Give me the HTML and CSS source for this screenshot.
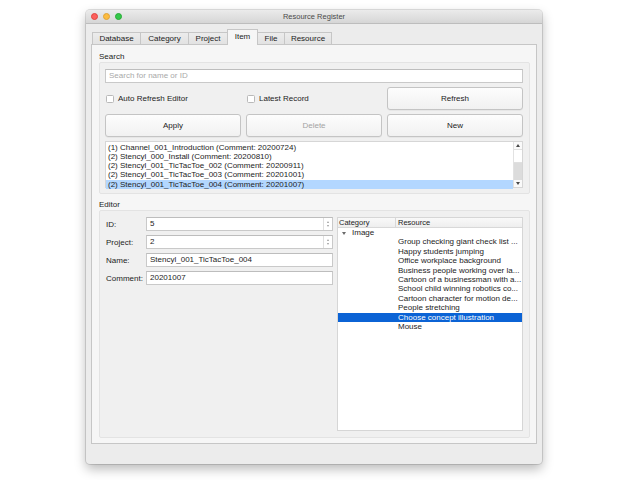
FILE: index.html
```html
<!DOCTYPE html>
<html>
<head>
<meta charset="utf-8">
<link rel="stylesheet" href="styles.css">
</head>
<body>
<div class="window">
  <div class="titlebar">
    <div class="lights"><span class="light red"></span><span class="light yellow"></span><span class="light green"></span></div>
    <div class="title">Resource Register</div>
  </div>
  <div class="content">
    <div class="tabs">
      <div class="tab w-db">Database</div>
      <div class="tab w-cat">Category</div>
      <div class="tab w-proj">Project</div>
      <div class="tab active w-item">Item</div>
      <div class="tab w-file">File</div>
      <div class="tab w-res">Resource</div>
    </div>
    <div class="pane">
      <div class="group-label">Search</div>
      <div class="group search-group">
        <div class="input search-input"><span class="placeholder">Search for name or ID</span></div>
        <div class="grid3">
          <label class="check"><span class="box"></span>Auto Refresh Editor</label>
          <label class="check"><span class="box"></span>Latest Record</label>
          <div class="button">Refresh</div>
          <div class="button">Apply</div>
          <div class="button disabled">Delete</div>
          <div class="button">New</div>
        </div>
        <div class="list">
          <div class="list-rows">
            <div class="row">(1) Channel_001_Introduction (Comment: 20200724)</div>
            <div class="row">(2) Stencyl_000_Install (Comment: 20200810)</div>
            <div class="row">(2) Stencyl_001_TicTacToe_002 (Comment: 20200911)</div>
            <div class="row">(2) Stencyl_001_TicTacToe_003 (Comment: 20201001)</div>
            <div class="row selected">(2) Stencyl_001_TicTacToe_004 (Comment: 20201007)</div>
          </div>
          <div class="scrollbar">
            <div class="arrow up"></div>
            <div class="thumb"></div>
            <div class="track"></div>
            <div class="arrow down"></div>
          </div>
        </div>
      </div>
      <div class="group-label">Editor</div>
      <div class="group editor-group">
        <div class="form">
          <div class="flabel">ID:</div>
          <div class="input spin"><span>5</span><span class="spinner"><i class="su"></i><i class="sd"></i></span></div>
          <div class="flabel">Project:</div>
          <div class="input spin"><span>2</span><span class="spinner"><i class="su"></i><i class="sd"></i></span></div>
          <div class="flabel">Name:</div>
          <div class="input"><span>Stencyl_001_TicTacToe_004</span></div>
          <div class="flabel">Comment:</div>
          <div class="input"><span>20201007</span></div>
        </div>
        <div class="tree">
          <div class="tree-header">
            <div class="hcol cat">Category</div>
            <div class="hcol res">Resource</div>
          </div>
          <div class="tree-row parent"><span class="disclosure"></span>Image</div>
          <div class="tree-row"><span class="res-text">Group checking giant check list ...</span></div>
          <div class="tree-row"><span class="res-text">Happy students jumping</span></div>
          <div class="tree-row"><span class="res-text">Office workplace background</span></div>
          <div class="tree-row"><span class="res-text">Business people working over la...</span></div>
          <div class="tree-row"><span class="res-text">Cartoon of a businessman with a...</span></div>
          <div class="tree-row"><span class="res-text">School child winning robotics co...</span></div>
          <div class="tree-row"><span class="res-text">Cartoon character for motion de...</span></div>
          <div class="tree-row"><span class="res-text">People stretching</span></div>
          <div class="tree-row selected"><span class="focus-dots"></span><span class="res-text">Choose concept illustration</span></div>
          <div class="tree-row"><span class="res-text">Mouse</span></div>
        </div>
      </div>
    </div>
  </div>
</div>
</body>
</html>
```

FILE: styles.css
```css
* { box-sizing: border-box; }
html, body { margin: 0; padding: 0; background: #ffffff; }
body {
  font-family: "Liberation Sans", Arial, sans-serif;
  font-size: 8px;
  color: #1c1c1c;
  width: 640px;
  height: 480px;
  overflow: hidden;
}
.window {
  margin: 10px 0 0 86px;
  width: 456px;
  height: 454px;
  background: #ececec;
  border-radius: 4px;
  box-shadow: 0 0 0 1px rgba(0,0,0,0.12), 0 5px 12px rgba(0,0,0,0.28);
  display: flex;
  flex-direction: column;
  overflow: hidden;
}
.titlebar {
  height: 14px;
  flex: none;
  background: linear-gradient(#ebebeb, #d6d6d6);
  border-bottom: 1px solid #bdbdbd;
  display: grid;
  grid-template-columns: 1fr;
  align-items: center;
  position: relative;
}
.lights {
  position: absolute;
  left: 5px;
  top: 3px;
  display: flex;
  gap: 5px;
}
.light { width: 7px; height: 7px; border-radius: 50%; display: block; }
.red { background: #fc605c; border: 0.5px solid #e0443e; }
.yellow { background: #fdbc40; border: 0.5px solid #dea236; }
.green { background: #34c84a; border: 0.5px solid #27aa35; }
.title {
  text-align: center;
  font-size: 7.5px;
  color: #4a4a4a;
  line-height: 13px;
}
.content {
  padding: 5px 5px 0 5px;
  display: flex;
  flex-direction: column;
}
.tabs {
  display: flex;
  align-items: flex-end;
  height: 15px;
  padding-left: 1px;
}
.tab {
  height: 12px;
  border: 1px solid #c6c6c6;
  border-bottom: none;
  background: linear-gradient(#ececec, #e2e2e2);
  text-align: center;
  line-height: 11px;
  margin-right: -1px;
}
.tab.active {
  background: #f6f6f6;
  line-height: 13px;
  position: relative;
  z-index: 1;
  margin-bottom: -1px;
  height: 16px;
}
.w-db { width: 49px; }
.w-cat { width: 49px; }
.w-proj { width: 40px; }
.w-item { width: 31px; }
.w-file { width: 28px; }
.w-res { width: 48px; }
.pane {
  height: 400px;
  border: 1px solid #c6c6c6;
  background: #f6f6f6;
  padding: 6px 6px 0 7px;
  display: flex;
  flex-direction: column;
}
.group-label {
  line-height: 11px;
  height: 11px;
}
.group {
  border: 1px solid #e3e3e3;
  background: #f0f0f0;
  border-radius: 2px;
}
.search-group {
  height: 132px;
  padding: 6px 6px 0 5px;
  display: flex;
  flex-direction: column;
  gap: 4px;
  margin-bottom: 5px;
}
.input {
  height: 14px;
  background: #ffffff;
  border: 1px solid #c9c9c9;
  border-top-color: #bdbdbd;
  line-height: 12px;
  padding-left: 3px;
  display: flex;
  align-items: center;
  justify-content: space-between;
}
.placeholder { color: #a9a9a9; }
.grid3 {
  display: grid;
  grid-template-columns: 136px 136px 136px;
  grid-auto-rows: 23px;
  column-gap: 5px;
  row-gap: 4px;
}
.check {
  display: flex;
  align-items: center;
  gap: 4px;
  padding-left: 1px;
}
.box {
  width: 8px;
  height: 8px;
  background: #ffffff;
  border: 1px solid #b9b9b9;
  border-radius: 1.5px;
  display: block;
}
.button {
  border: 1px solid #c4c4c4;
  border-radius: 3px;
  background: linear-gradient(#fdfdfd, #f1f1f1);
  box-shadow: 0 0.5px 0.5px rgba(0,0,0,0.08);
  text-align: center;
  line-height: 21px;
}
.button.disabled { color: #a3a3a3; }
.list {
  height: 47px;
  background: #ffffff;
  border: 1px solid #d6d6d6;
  display: flex;
}
.list-rows {
  flex: 1;
  padding-top: 0.5px;
}
.row {
  line-height: 9.3px;
  height: 9.3px;
  padding-left: 2px;
  white-space: nowrap;
}
.row.selected { background: #b3d7ff; }
.scrollbar {
  width: 9px;
  display: flex;
  flex-direction: column;
  border-left: 1px solid #e2e2e2;
  background: #fafafa;
}
.arrow {
  height: 7px;
  position: relative;
}
.arrow::after {
  content: "";
  position: absolute;
  left: 2px;
  top: 2px;
  border-left: 2px solid transparent;
  border-right: 2px solid transparent;
}
.arrow.up::after { border-bottom: 3px solid #4a4a4a; }
.arrow.down::after { border-top: 3px solid #4a4a4a; }
.thumb {
  height: 14px;
  background: #ffffff;
  border-top: 1px solid #e0e0e0;
  border-bottom: 1px solid #e0e0e0;
}
.track { flex: 1; background: #dcdcdc; }
.editor-group {
  height: 228px;
  padding: 6px 6px 0 5px;
  display: flex;
  gap: 4px;
  align-items: flex-start;
}
.form {
  display: grid;
  grid-template-columns: 41px 187px;
  grid-auto-rows: 14px;
  row-gap: 4px;
  align-items: center;
}
.flabel { padding-left: 1px; }
.spin { padding-right: 0; }
.spinner {
  width: 9px;
  height: 12px;
  border-left: 1px solid #e0e0e0;
  display: flex;
  flex-direction: column;
  align-items: center;
  justify-content: center;
  gap: 1.5px;
}
.spinner i {
  display: block;
  width: 0;
  height: 0;
  border-left: 1.5px solid transparent;
  border-right: 1.5px solid transparent;
}
.spinner .su { border-bottom: 2px solid #9a9a9a; }
.spinner .sd { border-top: 2px solid #9a9a9a; }
.tree {
  width: 187px;
  height: 214px;
  background: #ffffff;
  border: 1px solid #d6d6d6;
}
.tree-header {
  height: 10px;
  display: flex;
  background: linear-gradient(#f9f9f9, #eeeeee);
  border-bottom: 1px solid #d8d8d8;
  line-height: 9px;
  font-size: 7.5px;
}
.hcol.cat { width: 58px; padding-left: 1px; border-right: 1px solid #d8d8d8; }
.hcol.res { padding-left: 2px; }
.tree-row {
  height: 9.4px;
  line-height: 9.4px;
  white-space: nowrap;
  position: relative;
}
.tree-row.parent { padding-left: 14px; }
.disclosure {
  position: absolute;
  left: 4px;
  top: 3.5px;
  border-left: 2px solid transparent;
  border-right: 2px solid transparent;
  border-top: 3px solid #6a6a6a;
}
.res-text { padding-left: 60px; display: block; }
.tree-row.selected { background: #0b63d5; color: #ffffff; }
.focus-dots {
  position: absolute;
  left: 24px;
  top: 0;
  width: 36px;
  height: 100%;
  background-image: radial-gradient(rgba(255,255,255,0.35) 0.6px, transparent 0.7px);
  background-size: 2px 2px;
}
```
